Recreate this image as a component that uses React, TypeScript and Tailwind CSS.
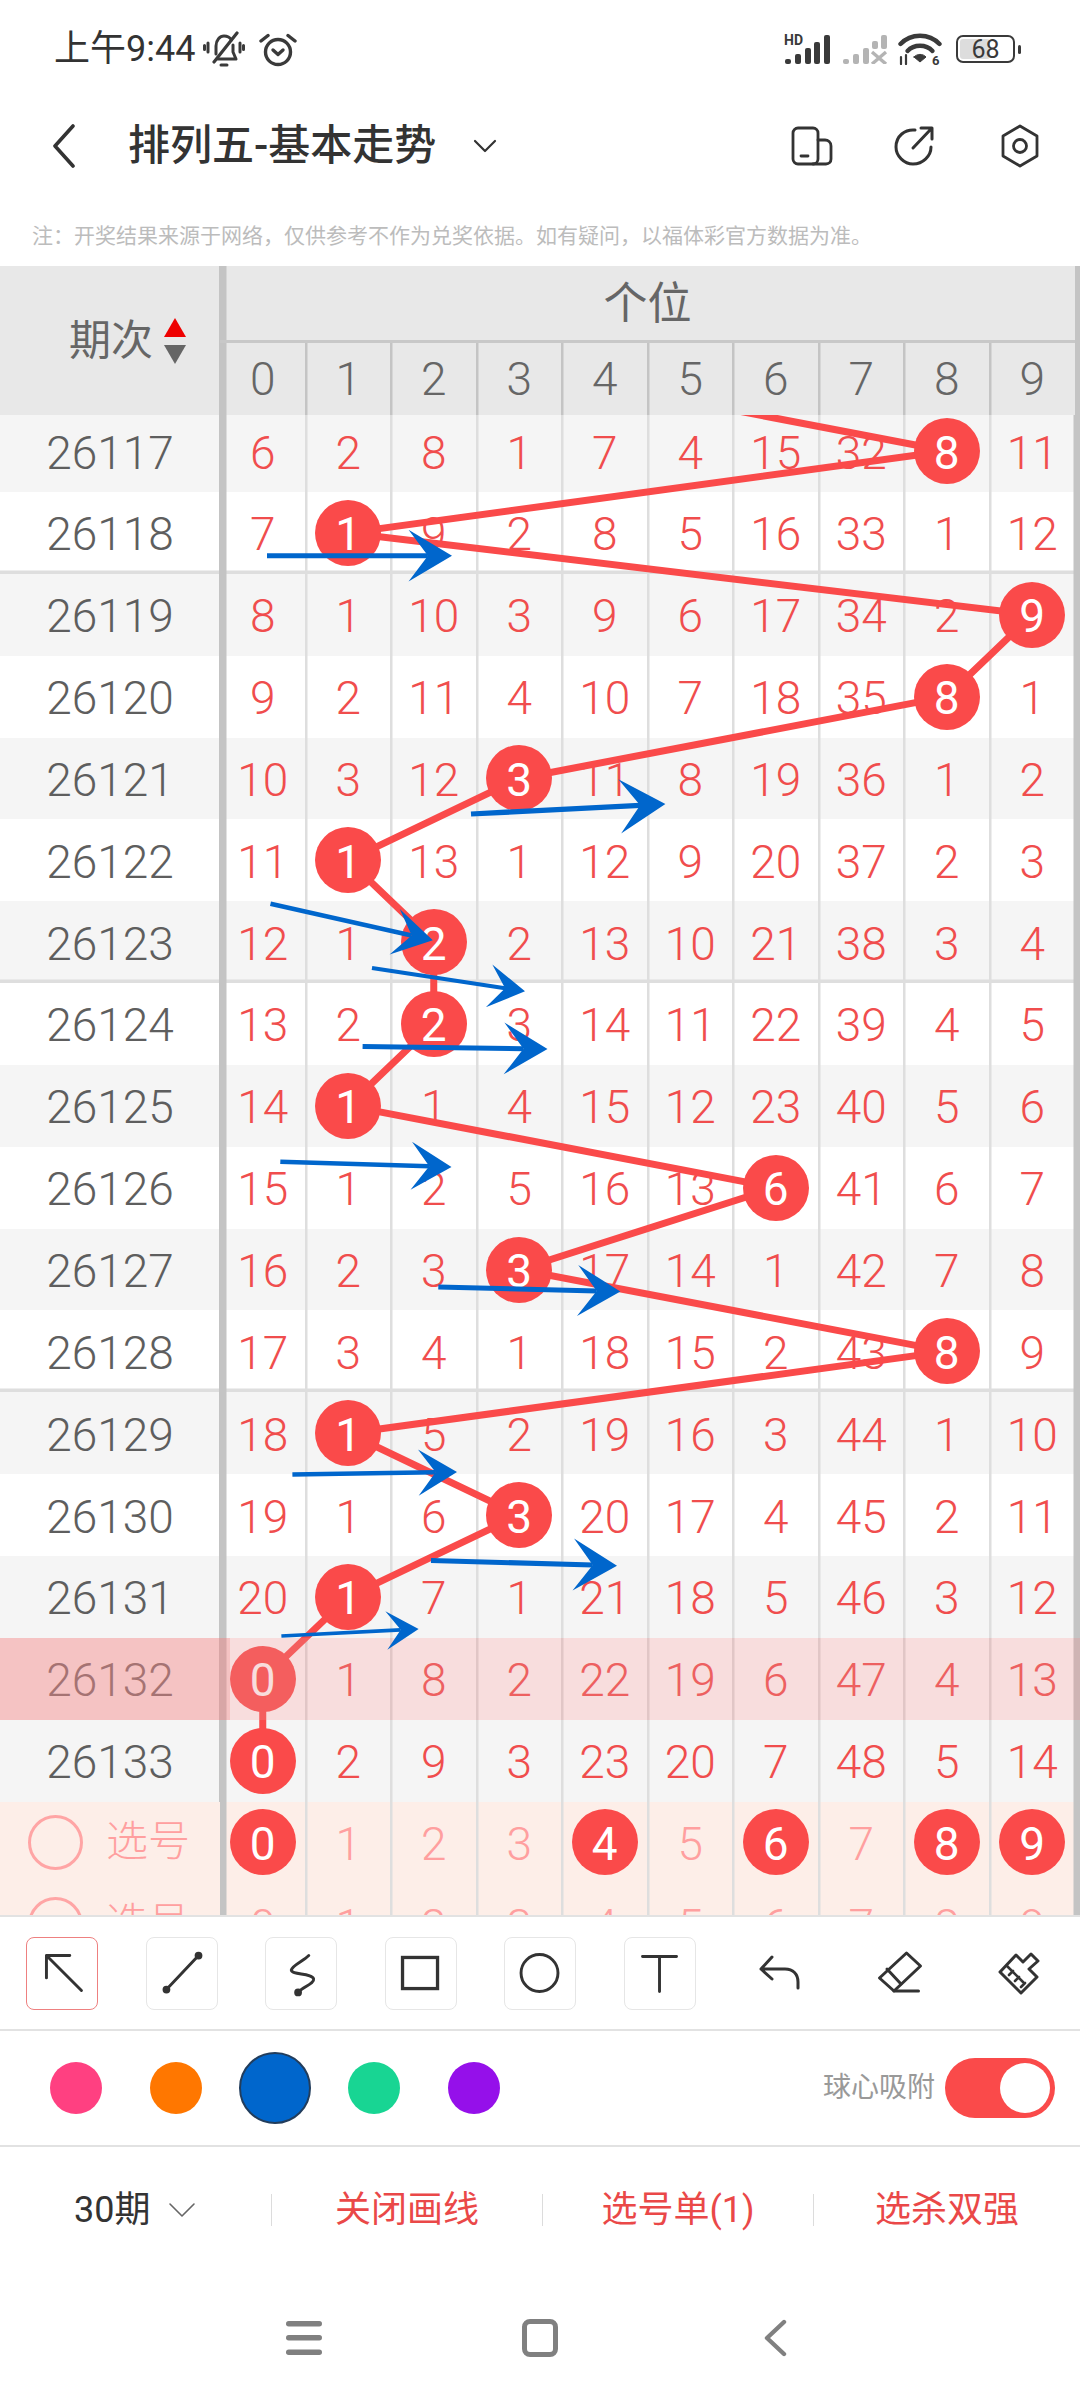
import React from "react";

const ROWS: { id: number; nums: number[]; ball: number }[] = [
  { id: 26117, nums: [6, 2, 8, 1, 7, 4, 15, 32, 8, 11], ball: 8 },
  { id: 26118, nums: [7, 1, 9, 2, 8, 5, 16, 33, 1, 12], ball: 1 },
  { id: 26119, nums: [8, 1, 10, 3, 9, 6, 17, 34, 2, 9], ball: 9 },
  { id: 26120, nums: [9, 2, 11, 4, 10, 7, 18, 35, 8, 1], ball: 8 },
  { id: 26121, nums: [10, 3, 12, 3, 11, 8, 19, 36, 1, 2], ball: 3 },
  { id: 26122, nums: [11, 1, 13, 1, 12, 9, 20, 37, 2, 3], ball: 1 },
  { id: 26123, nums: [12, 1, 2, 2, 13, 10, 21, 38, 3, 4], ball: 2 },
  { id: 26124, nums: [13, 2, 2, 3, 14, 11, 22, 39, 4, 5], ball: 2 },
  { id: 26125, nums: [14, 1, 1, 4, 15, 12, 23, 40, 5, 6], ball: 1 },
  { id: 26126, nums: [15, 1, 2, 5, 16, 13, 6, 41, 6, 7], ball: 6 },
  { id: 26127, nums: [16, 2, 3, 3, 17, 14, 1, 42, 7, 8], ball: 3 },
  { id: 26128, nums: [17, 3, 4, 1, 18, 15, 2, 43, 8, 9], ball: 8 },
  { id: 26129, nums: [18, 1, 5, 2, 19, 16, 3, 44, 1, 10], ball: 1 },
  { id: 26130, nums: [19, 1, 6, 3, 20, 17, 4, 45, 2, 11], ball: 3 },
  { id: 26131, nums: [20, 1, 7, 1, 21, 18, 5, 46, 3, 12], ball: 1 },
  { id: 26132, nums: [0, 1, 8, 2, 22, 19, 6, 47, 4, 13], ball: 0 },
  { id: 26133, nums: [0, 2, 9, 3, 23, 20, 7, 48, 5, 14], ball: 0 },
];

const DIGITS = [0, 1, 2, 3, 4, 5, 6, 7, 8, 9];
const PICKED = [0, 4, 6, 8, 9];

const cx = (c: number) => 262.75 + 85.5 * c;
const cy = (r: number) => (r === 0 ? 451 : 532.9 + 81.85 * (r - 1));

const LINE_POINTS = [
  `${cx(3)},369`,
  ...ROWS.map((row, r) => `${cx(row.ball)},${cy(r)}`),
].join(" ");

const ARROWS = [
  [267, 555.7, 452, 555.7],
  [471, 814, 665.4, 804],
  [270.5, 903.8, 432.8, 940.3],
  [372, 968, 525, 991.3],
  [362.6, 1046.4, 547.5, 1049],
  [280.3, 1161.7, 451.5, 1167],
  [438.3, 1287, 620.4, 1291.6],
  [292.4, 1474.5, 457, 1472],
  [431, 1560.4, 617, 1565.8],
  [281.4, 1636, 418.6, 1628.9],
];

function Arrow({ a }: { a: number[] }) {
  const [x1, y1, x2, y2] = a;
  const L = Math.hypot(x2 - x1, y2 - y1);
  const ux = (x2 - x1) / L;
  const uy = (y2 - y1) / L;
  const back = L * 0.235;
  const side = L * 0.14;
  const notch = L * 0.13;
  const nx = x2 - ux * notch;
  const ny = y2 - uy * notch;
  const pts = [
    [x2, y2],
    [x2 - ux * back - uy * side, y2 - uy * back + ux * side],
    [nx, ny],
    [x2 - ux * back + uy * side, y2 - uy * back - ux * side],
  ]
    .map((p) => p.join(","))
    .join(" ");
  return (
    <g>
      <line x1={x1} y1={y1} x2={nx} y2={ny} stroke="#0066cc" strokeWidth={L * 0.027} />
      <polygon points={pts} fill="#0066cc" />
    </g>
  );
}

function cellClass(c: number) {
  if (c === 0)
    return "flex w-[85.5px] shrink-0 items-center justify-center shadow-[inset_-1px_0_0_#dedede,1.5px_0_0_#dedede,inset_6.5px_0_0_#c4c4c4]";
  if (c === 9)
    return "flex w-[85.5px] shrink-0 items-center justify-center shadow-[inset_-1.5px_0_0_#c4c4c4,5px_0_0_#c4c4c4]";
  return "flex w-[85.5px] shrink-0 items-center justify-center shadow-[inset_-1px_0_0_#dedede,1.5px_0_0_#dedede]";
}

function headCellClass(c: number) {
  if (c === 0)
    return "flex w-[85.5px] shrink-0 items-center justify-center shadow-[inset_-1px_0_0_#c4c4c4,1.5px_0_0_#c4c4c4,inset_6.5px_0_0_#c4c4c4]";
  if (c === 9) return "flex w-[85.5px] shrink-0 items-center justify-center";
  return "flex w-[85.5px] shrink-0 items-center justify-center shadow-[inset_-1px_0_0_#c4c4c4,1.5px_0_0_#c4c4c4]";
}

function Num({ n }: { n: number | string }) {
  return <span className="mt-[3px]">{n}</span>;
}

function Ball({ n }: { n: number }) {
  return (
    <span className="relative z-20 flex h-[66px] w-[66px] items-center justify-center rounded-full bg-[#fa4a4a] font-normal text-white">
      <Num n={n} />
    </span>
  );
}

function rowClass(r: number) {
  if (r === 0) return "relative flex h-[77px] bg-[#f5f5f5]";
  if (r === 1 || r === 11) return "relative flex h-[81.85px] bg-white shadow-[inset_0_-3.5px_0_#dedede]";
  if (r === 6) return "relative flex h-[81.85px] bg-[#f5f5f5] shadow-[inset_0_-3.5px_0_#dedede]";
  return r % 2 === 0 ? "relative flex h-[81.85px] bg-[#f5f5f5]" : "relative flex h-[81.85px] bg-white";
}

function SelectRow({ balls }: { balls: number[] }) {
  return (
    <div className="relative flex h-[81.85px] bg-[#fdeee8] text-[#ff9f9f]">
      <div className="flex w-[220px] shrink-0 items-center pl-[28px]">
        <span className="h-[55px] w-[55px] rounded-full border-[3px] border-[#ffa5a5]" />
        <span className="ml-[23px] text-[42px]">选号</span>
      </div>
      {DIGITS.map((d) => (
        <div key={d} className={cellClass(d)}>
          {balls.includes(d) ? <Ball n={d} /> : <Num n={d} />}
        </div>
      ))}
    </div>
  );
}

function ToolButton({ active, children }: { active?: boolean; children: React.ReactNode }) {
  return (
    <div
      className={
        active
          ? "h-[73px] w-[72px] shrink-0 rounded-[8px] border-[1.5px] border-[#ee8080]"
          : "h-[73px] w-[72px] shrink-0 rounded-[8px] border-[1.5px] border-[#e6e6e6]"
      }
    >
      {children}
    </div>
  );
}

function ToolIcon({ children }: { children: React.ReactNode }) {
  return (
    <svg
      viewBox="0 0 72 73"
      className="h-full w-full"
      fill="none"
      stroke="#333"
      strokeWidth="3"
      strokeLinecap="round"
      strokeLinejoin="round"
    >
      {children}
    </svg>
  );
}

function BellOff() {
  return (
    <svg width="42" height="36" viewBox="0 0 42 36" fill="none" stroke="#3a3a3a" strokeWidth="3" strokeLinecap="round" strokeLinejoin="round">
      <path d="M13 23V15C13 9 17 5 21 5C24 5 27 6.5 28.5 9" />
      <path d="M30 14V21L33 28H15" />
      <path d="M11 31L34 2" strokeWidth="3.2" />
      <path d="M5 12V21M1.5 14.5V18.5M37 12V21M40.5 14.5V18.5" />
      <path d="M18 34H24" strokeWidth="3" />
    </svg>
  );
}

function AlarmIcon() {
  return (
    <svg width="38" height="35" viewBox="0 0 38 35" fill="none" stroke="#3a3a3a" strokeWidth="3.4" strokeLinecap="round" strokeLinejoin="round">
      <circle cx="19" cy="20" r="12.5" />
      <path d="M14 18L19 22.5L24 18" />
      <path d="M2 9L9 3.5M36 9L29 3.5" />
    </svg>
  );
}

function SignalIcon() {
  return (
    <svg width="46" height="30" viewBox="0 0 46 30" fill="#3a3a3a">
      <text x="0" y="11" fontSize="14" fontWeight="700" fontFamily="Roboto, sans-serif">HD</text>
      <rect x="1" y="25" width="6" height="5" rx="2" />
      <rect x="11" y="20" width="6" height="10" rx="2" />
      <rect x="21" y="14" width="6" height="16" rx="2" />
      <rect x="30" y="8" width="6" height="22" rx="2" />
      <rect x="40" y="1" width="6" height="29" rx="2" />
    </svg>
  );
}

function SignalOffIcon() {
  return (
    <svg width="46" height="30" viewBox="0 0 46 30" fill="#b4b4b4">
      <rect x="1" y="25" width="6" height="5" rx="2" />
      <rect x="11" y="20" width="6" height="10" rx="2" />
      <rect x="21" y="14" width="6" height="16" rx="2" />
      <rect x="30" y="7" width="6" height="8" rx="2" />
      <rect x="39" y="1" width="6" height="14" rx="2" />
      <path d="M30 18L44 30M44 18L30 30" stroke="#b4b4b4" strokeWidth="3.4" fill="none" />
    </svg>
  );
}

function WifiIcon() {
  return (
    <svg width="44" height="32" viewBox="0 0 44 32" fill="none" stroke="#3a3a3a" strokeLinecap="round">
      <path d="M2.5 11C13 0 31 0 41.5 11" strokeWidth="4.4" />
      <path d="M9.5 18C16 11 28 11 34.5 18" strokeWidth="4.4" />
      <path d="M16 24L22 29L28 24C25 20.5 19 20.5 16 24Z" fill="#3a3a3a" strokeWidth="1" />
      <path d="M3 24V31M8 22V31" strokeWidth="2.2" />
      <text x="34" y="31.5" fontSize="13" fontWeight="700" fill="#3a3a3a" stroke="none" fontFamily="Roboto, sans-serif">6</text>
    </svg>
  );
}

function BatteryIcon() {
  return (
    <div className="flex items-center">
      <div className="relative flex h-[28px] w-[59px] items-center justify-center rounded-[7px] border-[2.5px] border-[#3a3a3a]">
        <span className="absolute bottom-[2px] left-[2px] top-[2px] w-[30px] rounded-[3px] bg-[#dddddd]" />
        <span className="relative text-[25px] leading-none text-[#3a3a3a]">68</span>
      </div>
      <span className="ml-[3px] h-[9px] w-[3px] rounded-full bg-[#3a3a3a]" />
    </div>
  );
}

export default function App() {
  return (
    <div className="relative flex h-[2400px] w-[1080px] flex-col overflow-hidden bg-white [font-family:Roboto,'Noto_Sans_CJK_SC',sans-serif]">
      {/* status bar */}
      <div className="flex h-[98px] shrink-0 items-center pl-[54px] text-[#333]">
        <span className="w-[141px] whitespace-nowrap text-[36px] leading-none">上午9:44</span>
        <span className="ml-[8px] flex"><BellOff /></span>
        <span className="ml-[14px] flex"><AlarmIcon /></span>
        <span className="ml-[487px] flex"><SignalIcon /></span>
        <span className="ml-[12px] flex"><SignalOffIcon /></span>
        <span className="ml-[10px] flex"><WifiIcon /></span>
        <span className="ml-[14px] flex"><BatteryIcon /></span>
      </div>

      {/* title */}
      <div className="flex h-[96px] shrink-0 items-center pl-[52px] text-[#333]">
        <svg width="24" height="44" viewBox="0 0 24 44" fill="none" stroke="#333" strokeWidth="3.6" strokeLinecap="round" strokeLinejoin="round">
          <path d="M21 2L3 22L21 42" />
        </svg>
        <span className="ml-[52px] w-[308px] whitespace-nowrap text-[42px] font-medium leading-none">排列五-基本走势</span>
        <svg className="ml-[37px]" width="24" height="14" viewBox="0 0 24 14" fill="none" stroke="#333" strokeWidth="2.2" strokeLinecap="round" strokeLinejoin="round">
          <path d="M2 2L12 12L22 2" />
        </svg>
        <svg className="ml-[294px]" width="42" height="40" viewBox="0 0 42 40" fill="none" stroke="#333" strokeWidth="2.8" strokeLinecap="round" strokeLinejoin="round">
          <rect x="2" y="2" width="25" height="36" rx="5" />
          <path d="M27 14H34C37 14 40 16 40 20V33C40 36 38 38 35 38H22" />
          <path d="M10 30H17" />
        </svg>
        <svg className="ml-[60px]" width="42" height="42" viewBox="0 0 42 42" fill="none" stroke="#333" strokeWidth="3" strokeLinecap="round" strokeLinejoin="round">
          <path d="M22 5C12 4 3 11 3 22C3 31 11 39 20 39C30 39 38 31 38 22" />
          <path d="M20 23L38 4M28 3H39V14" />
        </svg>
        <svg className="ml-[65px]" width="40" height="44" viewBox="0 0 40 44" fill="none" stroke="#333" strokeWidth="2.8" strokeLinecap="round" strokeLinejoin="round">
          <path d="M20 2L37 12V32L20 42L3 32V12Z" />
          <circle cx="20" cy="22" r="6.5" />
        </svg>
      </div>

      {/* note */}
      <div className="flex h-[72px] shrink-0 items-center pl-[32px] pt-[12px] text-[21px] leading-none text-[#bcbcbc]">
        <span className="whitespace-nowrap">注：开奖结果来源于网络，仅供参考不作为兑奖依据。如有疑问，以福体彩官方数据为准。</span>
      </div>

      {/* table */}
      <div className="relative isolate h-[1649px] shrink-0 overflow-hidden text-[46px] font-light leading-none">
        <div className="flex h-[149px] bg-[#e8e8e8] text-[#666]">
          <div className="flex w-[220px] shrink-0 items-center pl-[69px] font-normal shadow-[inset_-1px_0_0_#c4c4c4]">
            <span className="text-[42px]">期次</span>
            <svg className="ml-[10px]" width="24" height="46" viewBox="0 0 24 46">
              <polygon points="12,0 23,19 1,19" fill="#ee0000" />
              <polygon points="1,27 23,27 12,46" fill="#666666" />
            </svg>
          </div>
          <div className="flex w-[855px] shrink-0 flex-col">
            <div className="flex h-[74px] items-center justify-center pt-[2px] text-[44px] font-normal shadow-[inset_6.5px_0_0_#c4c4c4]">个位</div>
            <div className="h-[3px] bg-[#c8c8c8]" />
            <div className="flex h-[72px]">
              {DIGITS.map((d) => (
                <div key={d} className={headCellClass(d)}>{d}</div>
              ))}
            </div>
          </div>
          <div className="w-[5px] shrink-0 bg-[#c4c4c4]" />
        </div>

        <div className="relative h-[1500px]">
          {ROWS.map((row, r) => (
            <div key={row.id} className={rowClass(r)}>
              <div
                className={
                  r === 0
                    ? "flex w-[220px] shrink-0 items-center justify-center pb-[5px] text-[#5e5e5e] shadow-[inset_-1px_0_0_#c4c4c4]"
                    : "flex w-[220px] shrink-0 items-center justify-center text-[#5e5e5e] shadow-[inset_-1px_0_0_#c4c4c4]"
                }
              >
                <Num n={row.id} />
              </div>
              {row.nums.map((n, c) => (
                <div key={c} className={`${cellClass(c)} ${r === 0 ? "pb-[5px]" : ""} text-[#f04d4d]`}>
                  {c === row.ball ? <Ball n={n} /> : <Num n={n} />}
                </div>
              ))}
              {r === 15 && (
                <>
                  <div className="absolute bottom-0 left-0 top-0 z-30 w-[230px] bg-[#eb8787]/50" />
                  <div className="absolute bottom-0 left-[230px] right-0 top-0 z-30 bg-[#e88e8e]/30" />
                </>
              )}
            </div>
          ))}
          <SelectRow balls={PICKED} />
          <SelectRow balls={[]} />

          <svg className="absolute left-0 top-0 z-10" width="1080" height="1500" viewBox="0 415 1080 1500" fill="none">
            <polyline points={LINE_POINTS} stroke="#fa4a4a" strokeWidth="7" strokeLinejoin="round" />
          </svg>
          <svg className="absolute left-0 top-0 z-40" width="1080" height="1500" viewBox="0 415 1080 1500" fill="none">
            {ARROWS.map((a, i) => (
              <Arrow key={i} a={a} />
            ))}
          </svg>
        </div>
      </div>

      {/* tools */}
      <div className="flex h-[116px] shrink-0 items-center gap-[47.5px] border-y-2 border-[#e2e2e2] pl-[26px]">
        <ToolButton active>
          <ToolIcon>
            <path d="M44 18H20V41M20 18L56 54" />
          </ToolIcon>
        </ToolButton>
        <ToolButton>
          <ToolIcon>
            <path d="M20 53L53 18" />
            <circle cx="20" cy="53" r="2.5" fill="#333" />
            <circle cx="53" cy="18" r="2.5" fill="#333" />
          </ToolIcon>
        </ToolButton>
        <ToolButton>
          <ToolIcon>
            <path d="M44 18C38 24 27 28 26 33C26 38 47 36 49 42C50 47 38 50 33 56" />
            <circle cx="33" cy="56" r="2.5" fill="#333" />
          </ToolIcon>
        </ToolButton>
        <ToolButton>
          <ToolIcon>
            <rect x="17" y="20" width="36" height="32" strokeWidth="3.4" strokeLinejoin="miter" />
          </ToolIcon>
        </ToolButton>
        <ToolButton>
          <ToolIcon>
            <circle cx="35.5" cy="36" r="19" />
          </ToolIcon>
        </ToolButton>
        <ToolButton>
          <ToolIcon>
            <path d="M18 19H53M35.5 19V55" />
          </ToolIcon>
        </ToolButton>
        <div className="h-[73px] w-[72px] shrink-0">
          <ToolIcon>
            <path d="M29 20L18 32L29 42M18 32H42C50 32 55 37 55 45V51" />
          </ToolIcon>
        </div>
        <div className="h-[73px] w-[72px] shrink-0">
          <ToolIcon>
            <path d="M16.5 41L43.5 16L57.5 29L31 54Z" />
            <path d="M24 32L38 47M31 54H55.5" />
          </ToolIcon>
        </div>
        <div className="h-[73px] w-[72px] shrink-0">
          <ToolIcon>
            <path d="M18 35L39 56L55 40L47 32L56 24L49 17L41 25L34 18Z" />
            <path d="M25 29L41 45M27 38L31 34M33 44L37 40M39 50L43 46" strokeWidth="2.6" />
          </ToolIcon>
        </div>
      </div>

      {/* colours */}
      <div className="flex h-[116px] shrink-0 items-center border-b-2 border-[#e2e2e2] pl-[50px]">
        <span className="h-[52px] w-[52px] shrink-0 rounded-full bg-[#ff4081]" />
        <span className="ml-[48px] h-[52px] w-[52px] shrink-0 rounded-full bg-[#ff7700]" />
        <span className="ml-[37px] h-[72px] w-[72px] shrink-0 rounded-full border-2 border-[#223d5c] bg-[#0066cc]" />
        <span className="ml-[37px] h-[52px] w-[52px] shrink-0 rounded-full bg-[#18d593]" />
        <span className="ml-[48px] h-[52px] w-[52px] shrink-0 rounded-full bg-[#9510ea]" />
        <span className="ml-[323px] w-[116px] shrink-0 whitespace-nowrap text-[28px] leading-none text-[#999]">球心吸附</span>
        <span className="ml-[6px] flex h-[60px] w-[110px] shrink-0 items-center justify-end rounded-full bg-[#fa4a4a] pr-[5px]">
          <span className="h-[50px] w-[50px] rounded-full bg-white" />
        </span>
      </div>

      {/* actions */}
      <div className="flex h-[126px] shrink-0 items-center text-[36px] leading-none text-[#ea4848]">
        <div className="flex w-[271px] shrink-0 items-center pl-[74px] text-[#333]">
          <span>30期</span>
          <svg className="ml-[18px]" width="28" height="16" viewBox="0 0 28 16" fill="none" stroke="#666" strokeWidth="1.6" strokeLinecap="round" strokeLinejoin="round">
            <path d="M2 2L14 14L26 2" />
          </svg>
        </div>
        <span className="h-[32px] w-px shrink-0 bg-[#dcdcdc]" />
        <div className="w-[270px] shrink-0 text-center">关闭画线</div>
        <span className="h-[32px] w-px shrink-0 bg-[#dcdcdc]" />
        <div className="w-[270px] shrink-0 text-center">选号单(1)</div>
        <span className="h-[32px] w-px shrink-0 bg-[#dcdcdc]" />
        <div className="flex-1 text-center">选杀双强</div>
      </div>

      {/* navigation */}
      <div className="flex flex-1 items-center gap-[200px] pl-[286px] pt-[3px]">
        <svg width="36" height="34" viewBox="0 0 36 34" fill="#808080">
          <rect x="0" y="0" width="36" height="5.4" rx="2.7" />
          <rect x="0" y="14" width="36" height="5.4" rx="2.7" />
          <rect x="0" y="28.6" width="36" height="5.4" rx="2.7" />
        </svg>
        <span className="h-[38px] w-[36px] shrink-0 rounded-[8px] border-[5px] border-[#808080]" />
        <svg className="ml-[5px]" width="24" height="38" viewBox="0 0 24 38" fill="none" stroke="#808080" strokeWidth="4.4" strokeLinecap="round" strokeLinejoin="round">
          <path d="M21 3L4 19L21 35" />
        </svg>
      </div>
    </div>
  );
}
